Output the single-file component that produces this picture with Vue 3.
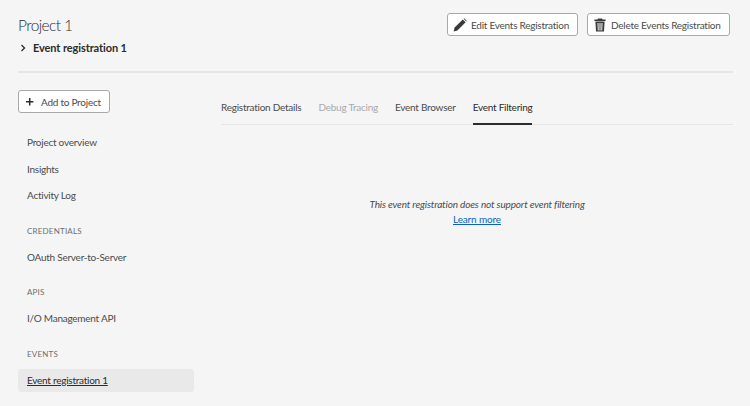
<script setup>
const tabs = [
  { label: 'Registration Details' },
  { label: 'Debug Tracing', disabled: true },
  { label: 'Event Browser' },
  { label: 'Event Filtering', active: true },
]
const nav = [
  { items: ['Project overview', 'Insights', 'Activity Log'] },
  { title: 'CREDENTIALS', items: ['OAuth Server-to-Server'] },
  { title: 'APIS', items: ['I/O Management API'] },
  { title: 'EVENTS', items: ['Event registration 1'], selected: true },
]
</script>

<template>
  <div class="page">
    <header class="header">
      <div class="titles">
        <h1 class="title">Project 1</h1>
        <div class="crumb">
          <svg class="chev" width="6" height="8" viewBox="0 0 6 8"><path d="M1.5 1 4.5 4 1.5 7" fill="none" stroke="#2c2c2c" stroke-width="1.3"/></svg>
          <span>Event registration 1</span>
        </div>
      </div>
      <div class="actions">
        <button class="btn edit">
          <svg width="14" height="14" viewBox="0 0 14 14"><path d="M0.6 13.4 1.6 9.6 9.8 1.4 12.6 4.2 4.4 12.4Z M10.6 0.7 11.2 0.3 13.6 2.7 13.2 3.4Z" fill="#3a3a3a"/></svg>
          <span>Edit Events Registration</span>
        </button>
        <button class="btn del">
          <svg width="12" height="14" viewBox="0 0 12 14"><path fill="#3a3a3a" fill-rule="evenodd" d="M4 .4h4l.6 1.2H11.6v1.3H.4V1.6h3zM1.4 3.6h9.2l-.6 10H2zM3.5 5l.3 7.4h.9L4.5 5zM5.5 5v7.4h1V5zM7.5 5l-.2 7.4h.9L8.5 5z"/></svg>
          <span>Delete Events Registration</span>
        </button>
      </div>
    </header>
    <div class="body">
      <aside class="side">
        <button class="btn add">
          <svg width="10" height="10" viewBox="0 0 10 10"><path d="M4.7 1v7.6M1 4.8h7.4" stroke="#2c2c2c" stroke-width="1.5" fill="none"/></svg>
          <span>Add to Project</span>
        </button>
        <nav class="nav">
          <section v-for="(g, i) in nav" :key="i" class="group">
            <div v-if="g.title" class="gtitle">{{ g.title }}</div>
            <div v-for="it in g.items" :key="it" class="item" :class="{ selected: g.selected }"><span>{{ it }}</span></div>
          </section>
        </nav>
      </aside>
      <main class="main">
        <div class="tabs">
          <div v-for="t in tabs" :key="t.label" class="tab" :class="{ active: t.active, disabled: t.disabled }">{{ t.label }}</div>
        </div>
        <div class="empty">
          <em>This event registration does not support event filtering</em>
          <a class="link">Learn more</a>
        </div>
      </main>
    </div>
  </div>
</template>

<style>
html, body { margin: 0; background: #f5f5f5; }
</style>

<style scoped>
.page {
  width: 750px;
  height: 406px;
  overflow: hidden;
  box-sizing: border-box;
  padding: 0 17px 0 18px;
  background: #f5f5f5;
  font-family: Lato, "Open Sans", sans-serif;
  font-size: 10px;
  letter-spacing: -0.25px;
  color: #4b4b4b;
  white-space: nowrap;
}
.header {
  box-sizing: border-box;
  border-bottom: 2px solid #e6e6e6;
  height: 73px;
  display: flex;
  justify-content: space-between;
  align-items: flex-start;
}
.title {
  margin: 14px 0 0;
  font-size: 15.5px;
  line-height: 22px;
  font-weight: 300;
  letter-spacing: -0.6px;
  color: #2c2c2c;
}
.crumb {
  display: flex;
  align-items: center;
  gap: 7px;
  margin-top: 3px;
  font-size: 11px;
  line-height: 18px;
  font-weight: 700;
  letter-spacing: -0.1px;
  color: #2c2c2c;
}
.chev { margin-left: 2px; flex: none; }
.actions {
  display: flex;
  gap: 9px;
  margin: 13px 3px 0 0;
}
.btn {
  display: flex;
  align-items: center;
  box-sizing: border-box;
  height: 23px;
  padding: 0;
  border: 1px solid #a9a9a9;
  border-radius: 3px;
  background: #fff;
  font: inherit;
  letter-spacing: inherit;
  color: #4b4b4b;
}
.btn svg { flex: none; }
.edit { width: 131px; padding-left: 5px; gap: 4px; }
.del { width: 143px; padding-left: 6px; gap: 5px; }
.add { width: 92px; padding-left: 6px; gap: 6px; margin-top: 17px; }
.body { display: flex; }
.side { width: 176px; flex: none; }
.nav { margin-top: 18px; }
.group { margin-bottom: 13.5px; }
.gtitle {
  height: 20px;
  line-height: 20px;
  margin-left: 9px;
  margin-bottom: 5px;
  font-size: 8px;
  letter-spacing: 0.2px;
  color: #6e6e6e;
}
.item {
  height: 23px;
  line-height: 23px;
  padding-left: 9px;
  margin-bottom: 3.5px;
  border-radius: 3px;
}
.item.selected { background: #e9e9e9; color: #2c2c2c; }
.item.selected span { text-decoration: underline; }
.main { flex: 1; margin-left: 27px; }
.tabs {
  display: flex;
  gap: 17px;
  height: 52px;
  box-sizing: border-box;
  border-bottom: 1px solid #e6e6e6;
}
.tab {
  padding-top: 25px;
  line-height: 18px;
  height: 52px;
  box-sizing: border-box;
  color: #4b4b4b;
}
.tab.disabled { color: #a9a9a9; }
.tab.active { color: #2c2c2c; border-bottom: 2px solid #2c2c2c; }
.empty {
  display: flex;
  flex-direction: column;
  align-items: center;
  margin-top: 70px;
  line-height: 18px;
  letter-spacing: -0.15px;
}
.link { color: #0d5fc4; text-decoration: underline; margin-top: -3px; }
</style>
